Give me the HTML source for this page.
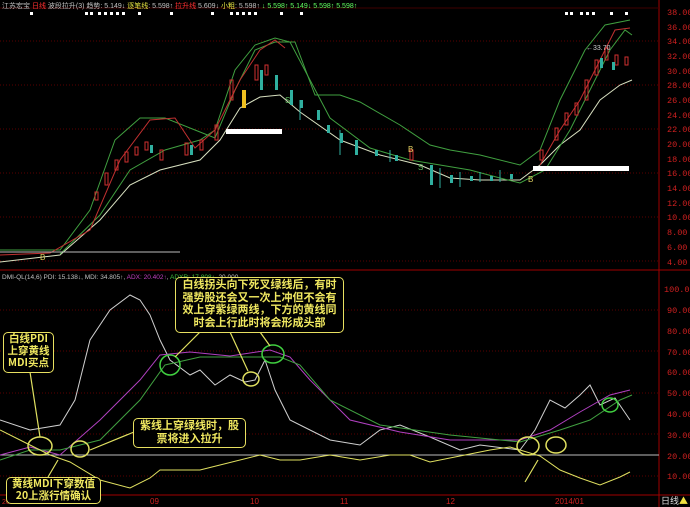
<!DOCTYPE html><html><head><meta charset="utf-8"><style>
body{margin:0;background:#000;width:690px;height:507px;overflow:hidden;font-family:"Liberation Sans","Noto Sans CJK SC",sans-serif}
svg{position:absolute;left:0;top:0}
.box{position:absolute;border:1.5px solid #e8e060;border-radius:5px;background:#000;color:#f0e860;font-family:"Noto Sans CJK SC","WenQuanYi Zen Hei",sans-serif;text-align:center;font-weight:bold;line-height:1.15}
</style></head><body>
<svg width="690" height="507" xmlns="http://www.w3.org/2000/svg" font-family="Liberation Sans, Noto Sans CJK SC, sans-serif">
<g stroke="#5a0000" stroke-width="1" stroke-dasharray="1,2">
<line x1="0" y1="41" x2="658" y2="41"/><line x1="0" y1="85" x2="658" y2="85"/><line x1="0" y1="129" x2="658" y2="129"/><line x1="0" y1="173" x2="658" y2="173"/><line x1="0" y1="217" x2="658" y2="217"/><line x1="0" y1="261" x2="658" y2="261"/>
<line x1="0" y1="310" x2="658" y2="310"/><line x1="0" y1="351" x2="658" y2="351"/><line x1="0" y1="393" x2="658" y2="393"/><line x1="0" y1="434" x2="658" y2="434"/><line x1="0" y1="476" x2="658" y2="476"/>
</g>
<line x1="0" y1="270" x2="690" y2="270" stroke="#a00000"/>
<line x1="0" y1="495" x2="690" y2="495" stroke="#a00000"/>
<line x1="659" y1="0" x2="659" y2="507" stroke="#a00000"/>
<line x1="0" y1="8" x2="659" y2="8" stroke="#400000"/>
<text x="2" y="8" font-size="7" fill="#c0c0c0">江苏宏宝 <tspan fill="#ff3030">日线</tspan> 波段拉升(3) 趋势: 5.149↓ <tspan fill="#e0e040">逐笔线</tspan>: 5.598↑ <tspan fill="#ff3030">拉升线</tspan> 5.609↓ <tspan fill="#e0e040">小粗</tspan>: 5.598↑ <tspan fill="#60ff60">↓ 5.598↑ 5.149↓ 5.598↑ 5.598↑</tspan></text>
<g fill="#fff">
<rect x="30" y="12" width="3" height="3"/><rect x="85" y="12" width="3" height="3"/><rect x="90" y="12" width="3" height="3"/><rect x="98" y="12" width="3" height="3"/><rect x="104" y="12" width="3" height="3"/><rect x="110" y="12" width="3" height="3"/><rect x="116" y="12" width="3" height="3"/><rect x="122" y="12" width="3" height="3"/><rect x="138" y="12" width="3" height="3"/><rect x="170" y="12" width="3" height="3"/><rect x="211" y="12" width="3" height="3"/><rect x="230" y="12" width="3" height="3"/><rect x="236" y="12" width="3" height="3"/><rect x="242" y="12" width="3" height="3"/><rect x="248" y="12" width="3" height="3"/><rect x="254" y="12" width="3" height="3"/><rect x="280" y="12" width="3" height="3"/><rect x="300" y="12" width="3" height="3"/><rect x="565" y="12" width="3" height="3"/><rect x="570" y="12" width="3" height="3"/><rect x="580" y="12" width="3" height="3"/><rect x="586" y="12" width="3" height="3"/><rect x="592" y="12" width="3" height="3"/><rect x="610" y="12" width="3" height="3"/><rect x="625" y="12" width="3" height="3"/>
</g>
<g font-size="8.5" fill="#d02020" font-family="Liberation Mono, monospace">
<text x="667" y="15">38.00</text><text x="667" y="30">36.00</text><text x="667" y="44">34.00</text><text x="667" y="59">32.00</text><text x="667" y="74">30.00</text><text x="667" y="88">28.00</text><text x="667" y="103">26.00</text><text x="667" y="118">24.00</text><text x="667" y="132">22.00</text><text x="667" y="147">20.00</text><text x="667" y="162">18.00</text><text x="667" y="176">16.00</text><text x="667" y="191">14.00</text><text x="667" y="206">12.00</text><text x="667" y="220">10.00</text><text x="667" y="235">8.00</text><text x="667" y="250">6.00</text><text x="667" y="265">4.00</text>
<text x="664" y="292">100.00</text><text x="667" y="313">90.00</text><text x="667" y="334">80.00</text><text x="667" y="355">70.00</text><text x="667" y="375">60.00</text><text x="667" y="396">50.00</text><text x="667" y="417">40.00</text><text x="667" y="438">30.00</text><text x="667" y="459">20.00</text><text x="667" y="479">10.00</text>
</g>
<g fill="none" stroke-width="1">
<polyline stroke="#40a040" points="0,250 60,250 90,210 115,140 140,118 165,118 195,130 215,138 235,90 255,50 275,42 295,42 315,95 340,95 360,102 400,125 430,145 450,150 480,155 520,165 540,150 560,100 585,50 605,25 630,20"/>
<polyline stroke="#d8e0c0" points="0,262 60,255 100,220 130,185 160,170 200,160 220,140 240,108 260,97 280,95 300,112 340,140 380,155 420,165 450,178 480,180 520,180 540,165 560,145 580,130 600,100 620,85 632,80"/>
<polyline stroke="#40a040" points="60,254 100,215 130,170 165,150 200,140 215,130 235,70 255,45 275,38 290,42 310,80 330,118 370,148 410,160 440,165 470,170 500,178 520,183 545,170 570,130 590,90 610,50 625,30 632,35"/>
<polyline stroke="#c03030" points="0,255 50,253 90,230 120,160 150,120 175,118 195,148 215,130 240,80 260,50 275,40 285,48"/>
<polyline stroke="#c03030" points="540,165 560,130 580,100 600,60 615,30 630,28"/>
<polyline stroke="#bbb" points="0,252 180,252"/>
</g>
<rect x="226" y="129" width="56" height="5" fill="#fff"/>
<rect x="533" y="166" width="96" height="5" fill="#fff"/>
<g stroke="#d03030" fill="none">
<path d="M95 200h3v-8h-3z M105 185h3v-12h-3z M115 170h3v-10h-3z M125 162h3v-10h-3z M135 155h3v-8h-3z M145 150h3v-8h-3z M160 160h3v-10h-3z M185 155h3v-12h-3z M200 150h3v-10h-3z M215 140h3v-15h-3z M230 100h3v-20h-3z M255 80h3v-15h-3z M265 75h3v-10h-3z M410 160h3v-10h-3z M540 160h3v-10h-3z M555 140h3v-12h-3z M565 125h3v-12h-3z M575 115h3v-12h-3z M585 100h3v-20h-3z M595 75h3v-15h-3z M605 60h3v-12h-3z M615 65h3v-10h-3z M625 65h3v-8h-3z"/>
</g>
<g fill="#30b0a0">
<rect x="150" y="145" width="3" height="8"/><rect x="190" y="145" width="3" height="10"/><rect x="260" y="70" width="3" height="20"/><rect x="275" y="75" width="3" height="15"/><rect x="290" y="90" width="3" height="15"/><rect x="300" y="100" width="3" height="8"/><rect x="317" y="110" width="3" height="10"/><rect x="327" y="125" width="3" height="8"/><rect x="340" y="133" width="3" height="10"/><rect x="355" y="140" width="3" height="15"/><rect x="375" y="150" width="3" height="6"/><rect x="395" y="155" width="3" height="6"/><rect x="430" y="165" width="3" height="20"/><rect x="450" y="175" width="3" height="8"/><rect x="470" y="176" width="3" height="5"/><rect x="490" y="176" width="3" height="5"/><rect x="510" y="174" width="3" height="5"/><rect x="600" y="58" width="3" height="10"/><rect x="612" y="62" width="3" height="8"/>
</g>
<rect x="242" y="90" width="4" height="18" fill="#f0c020"/>
<g stroke="#30b0a0" fill="none"><path d="M300 100v20 M340 130v25 M390 150v12 M440 168v20 M460 172v15 M480 172v10 M500 170v12"/></g>
<text x="586" y="50" font-size="7" fill="#ccc">←33.70</text>
<text x="40" y="260" font-size="8" fill="#e0d060">B</text><text x="408" y="152" font-size="8" fill="#e0d060">B</text><text x="528" y="182" font-size="8" fill="#e0d060">B</text>
<text x="285" y="103" font-size="8" fill="#60c060">S</text><text x="418" y="170" font-size="8" fill="#60c060">S</text>
<text x="2" y="279" font-size="6.5" fill="#c0c0c0">DMI-QL(14,6) PDI: 15.138↓, MDI: 34.805↑, <tspan fill="#c040c0">ADX: 20.402↑</tspan>, <tspan fill="#40c040">ADXR: 17.808↑</tspan>, 20.000</text>
<line x1="0" y1="455" x2="659" y2="455" stroke="#bbb"/>
<g fill="none" stroke-width="1">
<polyline stroke="#d0d0d0" points="0,420 30,430 60,425 75,400 90,340 110,310 130,295 140,300 150,315 160,340 170,360 190,375 200,370 215,385 230,375 245,382 255,380 265,360 275,390 290,420 310,430 330,440 360,445 380,430 400,425 430,437 460,450 480,445 520,450 535,430 550,400 565,408 580,395 590,385 600,405 615,398 630,420"/>
<polyline stroke="#b040c0" points="0,455 30,447 60,455 100,420 140,380 160,355 190,352 230,356 270,350 290,357 310,380 350,420 400,432 450,440 520,440 550,430 580,412 610,395 630,390"/>
<polyline stroke="#40a040" points="0,460 30,450 60,450 100,440 140,400 165,365 200,357 240,357 280,357 300,365 330,400 380,425 450,435 520,442 560,430 590,420 620,400 632,395"/>
<polyline stroke="#e0e060" points="0,430 20,440 50,455 70,462 100,480 130,488 150,478 160,470 200,470 220,465 260,455 280,460 300,460 330,455 360,460 390,455 410,455 430,462 460,456 490,450 510,447 540,456 560,470 580,478 600,485 620,477 630,472"/>
</g>
<g fill="none" stroke-width="1.5">
<ellipse cx="40" cy="446" rx="12" ry="9" stroke="#e0e060"/>
<ellipse cx="80" cy="449" rx="9" ry="8" stroke="#e0e060"/>
<ellipse cx="170" cy="365" rx="10" ry="10" stroke="#40d040"/>
<ellipse cx="251" cy="379" rx="8" ry="7" stroke="#e0e060"/>
<ellipse cx="273" cy="354" rx="11" ry="9" stroke="#40d040"/>
<ellipse cx="528" cy="446" rx="11" ry="9" stroke="#e0e060"/>
<ellipse cx="556" cy="445" rx="10" ry="8" stroke="#e0e060"/>
<ellipse cx="610" cy="405" rx="8" ry="7" stroke="#40d040"/>
</g>
<g stroke="#e0e060" stroke-width="1.2">
<line x1="30" y1="372" x2="40" y2="437"/><line x1="134" y1="432" x2="90" y2="450"/><line x1="200" y1="332" x2="175" y2="357"/><line x1="230" y1="332" x2="248" y2="371"/><line x1="260" y1="332" x2="270" y2="346"/><line x1="48" y1="477" x2="58" y2="460"/><line x1="525" y1="482" x2="538" y2="460"/>
</g>
<text x="2" y="504" font-size="7" fill="#d02020">2013/07</text>
<g font-size="8" fill="#d02020"><text x="150" y="504">09</text><text x="250" y="504">10</text><text x="340" y="504">11</text><text x="446" y="504">12</text><text x="555" y="504">2014/01</text></g>
<text x="661" y="504" font-size="9" fill="#ddd" font-family="Noto Sans CJK SC, sans-serif">日线<tspan fill="#f0e040">▲</tspan></text>
</svg>
<div class="box" style="left:3px;top:332px;width:49px;height:39px;font-size:10.5px">白线PDI<br>上穿黄线<br>MDI买点</div>
<div class="box" style="left:175px;top:277px;width:167px;height:54px;font-size:11px">白线拐头向下死叉绿线后，有时<br>强势股还会又一次上冲但不会有<br>效上穿紫绿两线，下方的黄线同<br>时会上行此时将会形成头部</div>
<div class="box" style="left:133px;top:418px;width:111px;height:28px;font-size:11px">紫线上穿绿线时，股<br>票将进入拉升</div>
<div class="box" style="left:6px;top:477px;width:93px;height:25px;font-size:10.5px">黄线MDI下穿数值<br>20上涨行情确认</div>
</body></html>
